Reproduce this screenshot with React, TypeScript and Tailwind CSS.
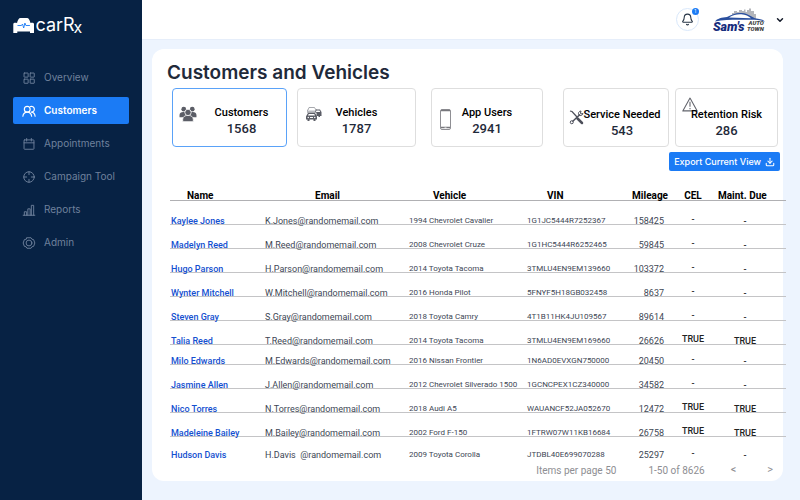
import React from 'react';
import { Bell, ChevronDown, Download } from 'lucide-react';

const strokeProps = {
  viewBox: '0 0 24 24',
  fill: 'none',
  stroke: 'currentColor',
  strokeWidth: 1.6,
  strokeLinecap: 'round' as const,
  strokeLinejoin: 'round' as const,
  className: 'h-3.5 w-3.5 shrink-0',
  'aria-hidden': true
};

function GridIcon() {
  return (
    <svg {...strokeProps}>
      <rect x="3.5" y="3.5" width="7" height="7" rx="0.5" />
      <rect x="14" y="3.5" width="7" height="7" rx="0.5" />
      <rect x="3.5" y="14" width="7" height="7" rx="0.5" />
      <rect x="14" y="14" width="7" height="7" rx="0.5" />
    </svg>
  );
}

function PeopleIcon() {
  return (
    <svg {...strokeProps} strokeWidth={2}>
      <circle cx="9" cy="9" r="5" />
      <path d="M1.5 21c.6-4 3.600-7 7.500-7s6.900 3 7.500 7" />
      <path d="M14.500 4.300a5 5 0 1 1 1.500 9.700c3.600.3 6 3 6.500 7" />
    </svg>
  );
}

function CalendarIcon() {
  return (
    <svg {...strokeProps}>
      <rect x="3.5" y="5" width="17" height="16" rx="1" />
      <path d="M3.5 10h17M8 2.500V7M16 2.500V7" />
    </svg>
  );
}

function TargetIcon() {
  return (
    <svg {...strokeProps}>
      <circle cx="12" cy="12" r="9" />
      <path d="M12 3v5M12 16v5M3 12h5M16 12h5" />
    </svg>
  );
}

function ReportsIcon() {
  return (
    <svg {...strokeProps}>
      <path d="M2 21h20M4 21v-6h4v6M10 21V10h4v11M16 21V4h4v17" />
    </svg>
  );
}

function AdminIcon() {
  return (
    <svg {...strokeProps}>
      <path d="M8.500 3h7L17 5.500l3 .8L22 12l-2 5.700-3 .8-1.500 2.500h-7L7 18.500l-3-.8L2 12l2-5.700 3-.8z" />
      <circle cx="12" cy="12" r="5" />
    </svg>
  );
}

function GroupIcon() {
  return (
    <svg viewBox="0 0 34 30" className="h-4 w-[18px]" fill="#5b5d66" aria-hidden="true">
      <circle cx="9" cy="6" r="4.500" />
      <circle cx="25" cy="6" r="4.500" />
      <path d="M1 21v-4c0-4 3-6 7-6 5 0 8 3 8 10zM33 21v-4c0-4-3-6-7-6-5 0-8 3-8 10z" />
      <g stroke="#fff" strokeWidth="1.500">
        <path d="M7 29.500V25c0-4.500 4-7.500 10-7.500S27 20.500 27 25v4.500z" />
        <circle cx="17" cy="12" r="6" />
      </g>
    </svg>
  );
}

function CarsIcon() {
  return (
    <svg viewBox="0 0 32 30" className="h-4 w-4" fill="#5b5d66" aria-hidden="true">
      <path d="M6 2h11l3 5h2v5H3V7h1z" fill="#fff" stroke="#8b8d94" strokeWidth="1.500" />
      <path d="M3 8h18v3H3z" fill="#b9bac0" />
      <path d="M18 10l2-4h8l3 5v8h-3v2h-3v-2h-4v-7z" />
      <path d="M21 8h6l1.500 3h-9z" fill="#fff" />
      <path d="M4 13h14l3 5 1 2v6h-3v3h-4v-3H7v3H3v-3H0v-6l1-2z" />
      <path d="M5.500 15h11l1.500 3H4z" fill="#fff" />
      <circle cx="4.500" cy="22" r="1.500" fill="#fff" />
      <circle cx="17.500" cy="22" r="1.500" fill="#fff" />
      <path d="M8 21h6v2H8z" fill="#fff" />
    </svg>
  );
}

function PhoneIcon() {
  return (
    <svg viewBox="0 0 11 21" className="h-[21px] w-[11px]" fill="none" aria-hidden="true">
      <rect x="0.500" y="0.500" width="10" height="20" rx="1.500" stroke="#8f8f94" />
      <path d="M1 1.500h9M1 18.500h9" stroke="#77777c" strokeWidth="1.500" />
      <path d="M4.500 19h2" stroke="#fff" />
    </svg>
  );
}

function ToolsIcon() {
  return (
    <svg viewBox="0 0 30 30" className="h-[15px] w-[15px]" fill="none" aria-hidden="true">
      <path d="M2 2l4 1 10 11" stroke="#4c4f5a" strokeWidth="2.500" />
      <path d="M17 17l9 9" stroke="#4c4f5a" strokeWidth="5" strokeLinecap="round" />
      <path d="M7 23L22 9" stroke="#4c4f5a" strokeWidth="3" />
      <path d="M24 2a5 5 0 0 0-4 8 5 5 0 0 0 8-3l-4 1-1-2z" stroke="#4c4f5a" strokeWidth="2" />
      <circle cx="5.500" cy="24.500" r="3" stroke="#4c4f5a" strokeWidth="2" />
    </svg>
  );
}

function WarningIcon() {
  return (
    <svg viewBox="0 0 30 28" className="h-[15px] w-4" fill="none" stroke="#62646c" aria-hidden="true">
      <path d="M15 2L28.500 26h-27z" strokeWidth="2" strokeLinejoin="round" />
      <path d="M15 9v9M15 20.500v2.500" strokeWidth="2" />
    </svg>
  );
}

function CarRxLogo() {
  return (
    <svg viewBox="0 0 72 28" className="h-7 w-[72px]" role="img" aria-label="carRx">
      <path
        d="M4 11C4.700 8 5.800 6 7.500 6h6.500c1.700 0 2.800 2 3.500 5 1.500-.5 3.500-.3 3.500 1V21h-4v-1.500H4.300V21H.3v-9c0-1.300 2.200-1.500 3.700-1z"
        fill="#fff"
      />
      <path d="M4.500 13.500h4l1-1.500 1.200 4 1.200-5 1 2.500h4" fill="none" stroke="#1b7bf5" strokeWidth="0.900" />
      <g fill="#fff" fontFamily="Inter, sans-serif">
        <text x="22.500" y="19" fontSize="18">carR</text>
        <text x="60.500" y="20.500" fontSize="16">x</text>
      </g>
    </svg>
  );
}

function DealerLogo() {
  return (
    <svg viewBox="0 0 54 28" className="h-7 w-[54px]" role="img" aria-label="Sam's Auto Town">
      <path
        d="M19 9.500V7h2V5h3v1h2V4h3v1h2V3.500h1.500V6H34V4h2V2.500h2V5h3v3h2v5.500L34 9z"
        fill="#b4b6bb"
      />
      <path d="M2 15.500c2-3 7-4 12-4.500C19 8.500 23 6.500 29 7c6 .4 9 3.800 13 5.200 5 .8 8 1.300 10 3.300-6-2-13-2-18-1.700-12 0-22-.3-32 1.700z" fill="#2a4f9e" />
      <path d="M16 11.500C20 9 24 8 28.500 8.300c4 .3 7 2 9.500 3.900z" fill="#fff" />
      <g fontFamily="Roboto, sans-serif" fontWeight="900" fontStyle="italic">
        <text x="0" y="25" fontSize="12.500" fill="#152c7c">Sam's</text>
        <text x="35.500" y="19" fontSize="6" fill="#444">AUTO</text>
        <text x="34" y="25" fontSize="6" fill="#444">TOWN</text>
      </g>
    </svg>
  );
}

const navItems = [
  { label: 'Overview', icon: GridIcon },
  { label: 'Customers', icon: PeopleIcon },
  { label: 'Appointments', icon: CalendarIcon },
  { label: 'Campaign Tool', icon: TargetIcon },
  { label: 'Reports', icon: ReportsIcon },
  { label: 'Admin', icon: AdminIcon }
];

const stats = [
  {
    label: 'Customers',
    value: 1568,
    icon: <GroupIcon />,
    iconClass: 'left-1.5 top-[17px]',
    cardClass: 'mr-2.5 border-[#5aa2f8] pl-6 pt-4'
  },
  {
    label: 'Vehicles',
    value: 1787,
    icon: <CarsIcon />,
    iconClass: 'left-2 top-[17px]',
    cardClass: 'mr-[15px] border-[#dedede] pt-4'
  },
  {
    label: 'App Users',
    value: 2941,
    icon: <PhoneIcon />,
    iconClass: 'left-2 top-5',
    cardClass: 'mr-5 border-[#dedede] pt-4'
  },
  {
    label: 'Service Needed',
    value: 543,
    icon: <ToolsIcon />,
    iconClass: 'left-[5px] top-[21px]',
    cardClass: 'mr-1.5 border-[#dedede] pl-3 pt-[18px]'
  },
  {
    label: 'Retention Risk',
    value: 286,
    icon: <WarningIcon />,
    iconClass: 'left-1.5 top-2',
    cardClass: 'border-[#dedede] pt-[18px]'
  }
];

const customers = [
  { name: 'Kaylee Jones', email: 'K.Jones@randomemail.com', vehicle: '1994 Chevrolet Cavalier', vin: '1G1JC5444R7252367', mileage: 158425, cel: false },
  { name: 'Madelyn Reed', email: 'M.Reed@randomemail.com', vehicle: '2008 Chevrolet Cruze', vin: '1G1HC5444R6252465', mileage: 59845, cel: false },
  { name: 'Hugo Parson', email: 'H.Parson@randomemail.com', vehicle: '2014 Toyota Tacoma', vin: '3TMLU4EN9EM139660', mileage: 103372, cel: false },
  { name: 'Wynter Mitchell', email: 'W.Mitchell@randomemail.com', vehicle: '2016 Honda Pilot', vin: '5FNYF5H18GB032458', mileage: 8637, cel: false },
  { name: 'Steven Gray', email: 'S.Gray@randomemail.com', vehicle: '2018 Toyota Camry', vin: '4T1B11HK4JU109567', mileage: 89614, cel: false },
  { name: 'Talia Reed', email: 'T.Reed@randomemail.com', vehicle: '2014 Toyota Tacoma', vin: '3TMLU4EN9EM169660', mileage: 26626, cel: true },
  { name: 'Milo Edwards', email: 'M.Edwards@randomemail.com', vehicle: '2016 Nissan Frontier', vin: '1N6AD0EVXGN750000', mileage: 20450, cel: false, compact: true },
  { name: 'Jasmine Allen', email: 'J.Allen@randomemail.com', vehicle: '2012 Chevrolet Silverado 1500', vin: '1GCNCPEX1CZ340000', mileage: 34582, cel: false },
  { name: 'Nico Torres', email: 'N.Torres@randomemail.com', vehicle: '2018 Audi A5', vin: 'WAUANCF52JA052670', mileage: 12472, cel: true },
  { name: 'Madeleine Bailey', email: 'M.Bailey@randomemail.com', vehicle: '2002 Ford F-150', vin: '1FTRW07W11KB16684', mileage: 26758, cel: true },
  { name: 'Hudson Davis', email: 'H.Davis  @randomemail.com', vehicle: '2009 Toyota Corolla', vin: 'JTDBL40E699070288', mileage: 25297, cel: false }
];

function Sidebar() {
  const [active, setActive] = React.useState('Customers');

  return (
    <aside className="w-[142px] shrink-0 bg-[#072244] px-[13px] pt-3">
      <CarRxLogo />
      <nav className="mt-6 flex flex-col gap-1.5">
        {navItems.map((item) => (
          <button
            key={item.label}
            onClick={() => setActive(item.label)}
            className={`flex h-[27px] items-center gap-2 rounded-xs pl-[9px] text-left font-[Inter,sans-serif] text-[10px] ${
              active === item.label ? 'bg-[#1b7bf5] font-semibold text-white' : 'text-[#6f819c]'
            }`}
          >
            <item.icon />
            {item.label}
          </button>
        ))}
      </nav>
    </aside>
  );
}

function TopBar() {
  return (
    <header className="flex h-10 items-center justify-end border-b border-[#e6eefa] bg-white pr-[15px]">
      <button
        aria-label="Notifications"
        className="relative flex h-[23px] w-[23px] items-center justify-center rounded-full border border-[#d9e8fb] text-[#263445]"
      >
        <Bell className="h-[13px] w-[13px]" strokeWidth={2} />
        <span className="absolute -right-px -top-px flex h-[7px] w-[7px] items-center justify-center rounded-full bg-[#1b7bf5] text-[5px] text-white">
          1
        </span>
      </button>
      <button aria-label="Account menu" className="ml-3.5 flex items-center gap-2">
        <DealerLogo />
        <ChevronDown className="h-2.5 w-2.5 text-[#111827]" strokeWidth={3.5} />
      </button>
    </header>
  );
}

function CustomersTable() {
  return (
    <table className="w-full table-fixed border-separate border-spacing-0 text-[9px] leading-1 text-[#3d4654] [&_td]:border-b [&_td]:border-[#c4c4c6] [&_td]:p-0 [&_td]:pb-px [&_td]:align-bottom [&_td]:whitespace-pre [&_th]:border-b [&_th]:border-[#b0b0b3] [&_th]:p-0 [&_th]:pb-0.5 [&_th]:align-bottom [&_th]:font-bold [&_th]:whitespace-nowrap">
      <colgroup>
        <col className="w-[95px]" />
        <col className="w-[144px]" />
        <col className="w-[118px]" />
        <col className="w-[93px]" />
        <col className="w-[48px]" />
        <col className="w-[50px]" />
        <col className="w-[68px]" />
      </colgroup>
      <thead>
        <tr className="h-[21px] text-left text-[10px] text-black">
          <th><span className="pl-[17px]">Name</span></th>
          <th><span className="pl-[50px]">Email</span></th>
          <th><span className="pl-6">Vehicle</span></th>
          <th><span className="pl-5">VIN</span></th>
          <th className="text-right">Mileage</th>
          <th className="text-center">CEL</th>
          <th>Maint. Due</th>
        </tr>
      </thead>
      <tbody>
        {customers.map((customer) => (
          <tr
            key={customer.name}
            className={`last:h-[22px] [&:last-child>td]:border-transparent ${customer.compact ? 'h-5' : 'h-6'}`}
          >
            <td>
              <a href="#customer" className="pl-px font-medium text-[#1450d0]">{customer.name}</a>
            </td>
            <td>{customer.email}</td>
            <td className="text-[8px]">{customer.vehicle}</td>
            <td className="text-[8px]">{customer.vin}</td>
            <td className="text-right"><span className="pr-1">{customer.mileage}</span></td>
            <td className="text-center font-medium text-[#222]">
              <span className="block pb-0.5">{customer.cel ? 'TRUE' : '-'}</span>
            </td>
            <td className="text-center font-medium text-[#222]">
              <span className="pr-3.5">{customer.cel ? 'TRUE' : '-'}</span>
            </td>
          </tr>
        ))}
      </tbody>
    </table>
  );
}

export default function App() {
  return (
    <div className="flex min-h-screen bg-[#edf4fe] font-[Roboto,sans-serif]">
      <Sidebar />
      <div className="flex min-w-0 flex-1 flex-col">
        <TopBar />
        <main className="mb-5 ml-2.5 mr-[17px] mt-[9px] rounded-xl bg-white pt-3">
          <h1 className="pl-[15px] font-[Inter,sans-serif] text-[19px] font-semibold leading-6 text-[#1f2a3a]">
            Customers and Vehicles
          </h1>

          {/* Stat cards */}
          <div className="ml-5 mr-[5px] mt-[3px] grid grid-cols-[125fr_134fr_132fr_112fr_103fr]">
            {stats.map((stat) => (
              <button
                key={stat.label}
                className={`relative flex h-[59px] min-w-0 flex-col items-center rounded border bg-white ${stat.cardClass}`}
              >
                <span className={`absolute ${stat.iconClass}`}>{stat.icon}</span>
                <span className="relative whitespace-nowrap text-[11px] font-medium leading-4 text-black">{stat.label}</span>
                <span className="text-[13px] font-medium leading-4 text-[#1f2a3a]">{stat.value}</span>
              </button>
            ))}
          </div>

          <div className="mr-[3px] mt-[5px] flex justify-end">
            <button className="flex h-[19px] items-center gap-1 rounded-xs bg-[#1b7bf5] px-[5px] font-[Inter,sans-serif] text-[9px] font-medium text-white">
              Export Current View
              <Download className="h-2.5 w-2.5" strokeWidth={2.5} />
            </button>
          </div>

          {/* Table rules run slightly past the card edge */}
          <div className="-mr-[3px] ml-[18px] mt-[9px]">
            <CustomersTable />
          </div>

          <div className="flex h-[22px] items-center justify-end pr-2.5 text-[10px] text-[#8e8e92]">
            <span className="mr-8">Items per page 50</span>
            <span className="mr-[26px]">1-50 of 8626</span>
            <button aria-label="Previous page" className="mr-[31px] text-[11px]">&lt;</button>
            <button aria-label="Next page" className="text-[11px]">&gt;</button>
          </div>
        </main>
      </div>
    </div>
  );
}
